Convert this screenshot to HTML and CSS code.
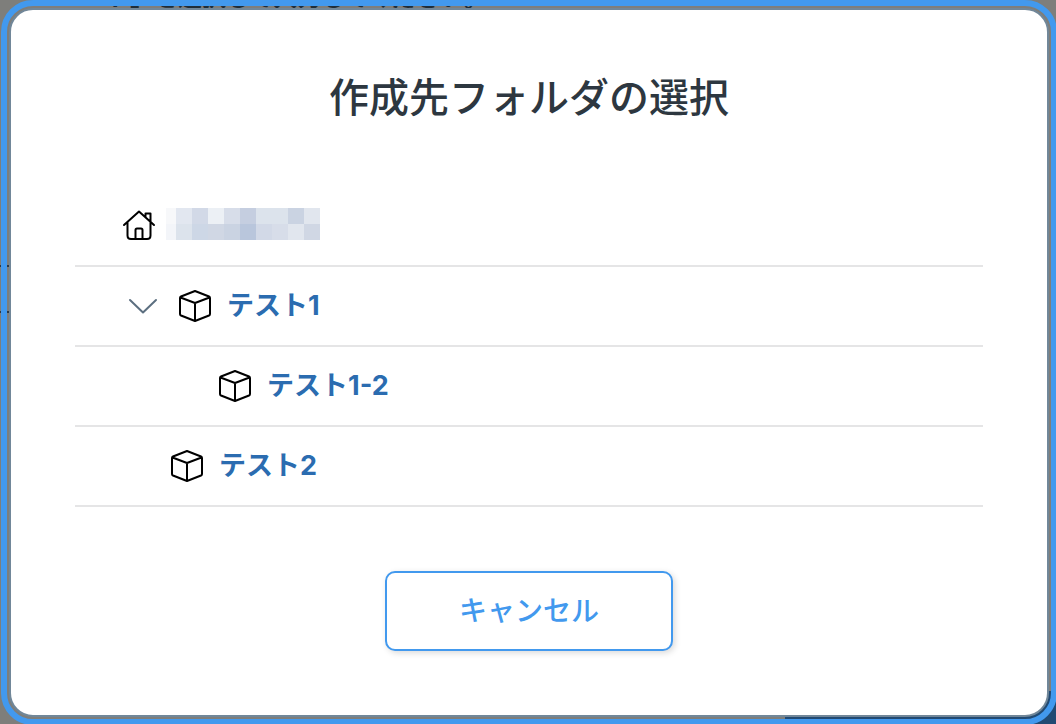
FILE: index.html
```html
<!DOCTYPE html>
<html lang="ja">
<head>
    <meta charset="UTF-8">
    <meta name="viewport" content="width=device-width, initial-scale=1.0">
    <title>作成先フォルダの選択</title>
    <link rel="stylesheet" href="styles.css">
</head>
<body>
    <svg class="symbols" aria-hidden="true">
        <symbol id="box" viewBox="0 0 34 34">
            <path d="M17 2 31 7.500Q32 8 32 9V25Q32 26 31 26.500L17 32 3 26.500Q2 26 2 25V9Q2 8 3 7.500ZM2.500 8.500 17 14 31.500 8.500M17 14V31.500"/>
        </symbol>
    </svg>
    <div class="page-behind" aria-hidden="true">
        <p class="page-note">ト」を選択して入力してください。</p>
        <div class="page-field"></div>
        <div class="page-footer"></div>
    </div>
    <div class="dialog" role="dialog" aria-labelledby="dialog-title">
        <h1 id="dialog-title">作成先フォルダの選択</h1>
        <ul class="folders">
            <li class="folder root">
                <svg class="icon-home" viewBox="0 0 34 34" aria-hidden="true">
                    <path d="M2 17 17 3.500 32 17M5.500 14.500V27.500Q5.500 31 9 31H25Q28.500 31 28.500 27.500V14.500M23.500 9V5.500H28.500V13.500M13.500 31V22Q13.500 20.500 15 20.500H19Q20.500 20.500 20.500 22V31"/>
                </svg>
                <span class="masked">
                    <i class="m1"></i><i class="m2"></i><i class="m3"></i><i class="m4"></i><i class="m5"></i><i class="m6"></i><i class="m7"></i><i class="m7"></i><i class="m8"></i><i class="m9"></i>
                    <i class="m10"></i><i class="m7"></i><i class="m11"></i><i class="m12"></i><i class="m13"></i><i class="m14"></i><i class="m3"></i><i class="m5"></i><i class="m9"></i><i class="m12"></i>
                </span>
            </li>
            <li class="folder open">
                <button type="button" class="toggle" aria-label="閉じる" aria-expanded="true">
                    <svg viewBox="0 0 30 16" aria-hidden="true"><path d="M2 2 15 14.500 28 2"/></svg>
                </button>
                <svg class="icon-box" aria-hidden="true"><use href="#box"/></svg>
                <a href="#">テスト1</a>
            </li>
            <li class="folder child">
                <svg class="icon-box" aria-hidden="true"><use href="#box"/></svg>
                <a href="#">テスト1-2</a>
            </li>
            <li class="folder closed">
                <svg class="icon-box" aria-hidden="true"><use href="#box"/></svg>
                <a href="#">テスト2</a>
            </li>
        </ul>
        <button type="button" class="cancel">キャンセル</button>
    </div>
</body>
</html>
```

FILE: styles.css
```css
* {
    box-sizing: border-box;
}
body {
    margin: 0;
    padding: 8px 7px 7px 9px;
    min-height: 100vh;
    display: flex;
    background-color: #7e7e7b;
    font-family: Inter, "Noto Sans CJK JP", sans-serif;
    color: #2d3740;
    overflow: hidden;
}
.symbols {
    position: absolute;
    width: 0;
    height: 0;
}
svg {
    fill: none;
    stroke: #000;
    stroke-width: 2;
    stroke-linejoin: round;
    stroke-linecap: round;
    flex: none;
}

/* page under the dialog */
.page-behind {
    position: absolute;
    inset: 0;
    overflow: hidden;
}
.page-note {
    position: absolute;
    top: -18px;
    left: 106px;
    margin: 0;
    font-size: 24px;
    line-height: 32px;
    font-weight: bold;
    color: #1f2d38;
}
.page-field {
    position: absolute;
    top: 265px;
    left: 0;
    width: 9px;
    height: 48px;
    border: solid #2d3740;
    border-width: 2px 0;
}
.page-footer {
    position: absolute;
    right: 0;
    bottom: 0;
    width: 271px;
    height: 33px;
    background-color: #214a73;
}

.dialog {
    position: relative;
    flex: 1;
    display: flex;
    flex-direction: column;
    align-items: center;
    padding: 56px 64px 62px;
    border: 2px solid #718799;
    border-radius: 24px;
    outline: 6px solid #4299ee;
    outline-offset: 2px;
    background-color: #fff;
}
h1 {
    margin: 0 0 55px;
    font-size: 40px;
    line-height: 64px;
    font-weight: 500;
}
.folders {
    width: 100%;
    margin: 0 0 64px;
    padding: 0;
    list-style: none;
}
.folder {
    display: flex;
    align-items: center;
    height: 80px;
    padding-left: 47px;
    border-bottom: 2px solid #e5e5e6;
}
.folder.root {
    height: 82px;
}
.folder.open {
    padding-left: 53px;
}
.folder.child {
    padding-left: 143px;
}
.folder.closed {
    padding-left: 95px;
}
.folder a {
    margin-left: 15px;
    font-size: 27px;
    line-height: 40px;
    font-weight: bold;
    color: #2b6cb0;
    text-decoration: none;
}
.icon-home,
.icon-box {
    width: 34px;
    height: 34px;
}
.toggle {
    display: flex;
    margin-right: 20px;
    padding: 0;
    border: 0;
    background: none;
}
.toggle svg {
    width: 30px;
    height: 16px;
    stroke: #5c6f80;
}
.masked {
    display: grid;
    grid-template-columns: 10px repeat(9, 16px);
    grid-auto-rows: 16px;
    margin: 0 0 2px 10px;
}
.m1 { background-color: #f7f8fa; }
.m2 { background-color: #e2e7f0; }
.m3 { background-color: #d2d9e7; }
.m4 { background-color: #ecf0f5; }
.m5 { background-color: #d7dde9; }
.m6 { background-color: #c5cee0; }
.m7 { background-color: #dce3ec; }
.m8 { background-color: #cad3e2; }
.m9 { background-color: #e1e6ee; }
.m10 { background-color: #f3f5f9; }
.m11 { background-color: #cdd7e6; }
.m12 { background-color: #d0d7e4; }
.m13 { background-color: #cad3e2; }
.m14 { background-color: #b9c6dc; }
.cancel {
    width: 288px;
    height: 80px;
    padding: 0 0 4px;
    border: 2px solid #4299ee;
    border-radius: 10px;
    background-color: #fff;
    box-shadow: 2px 2px 6px rgba(0, 0, 0, 0.15);
    font-family: inherit;
    font-size: 28px;
    font-weight: 500;
    color: #4299ee;
}
```
